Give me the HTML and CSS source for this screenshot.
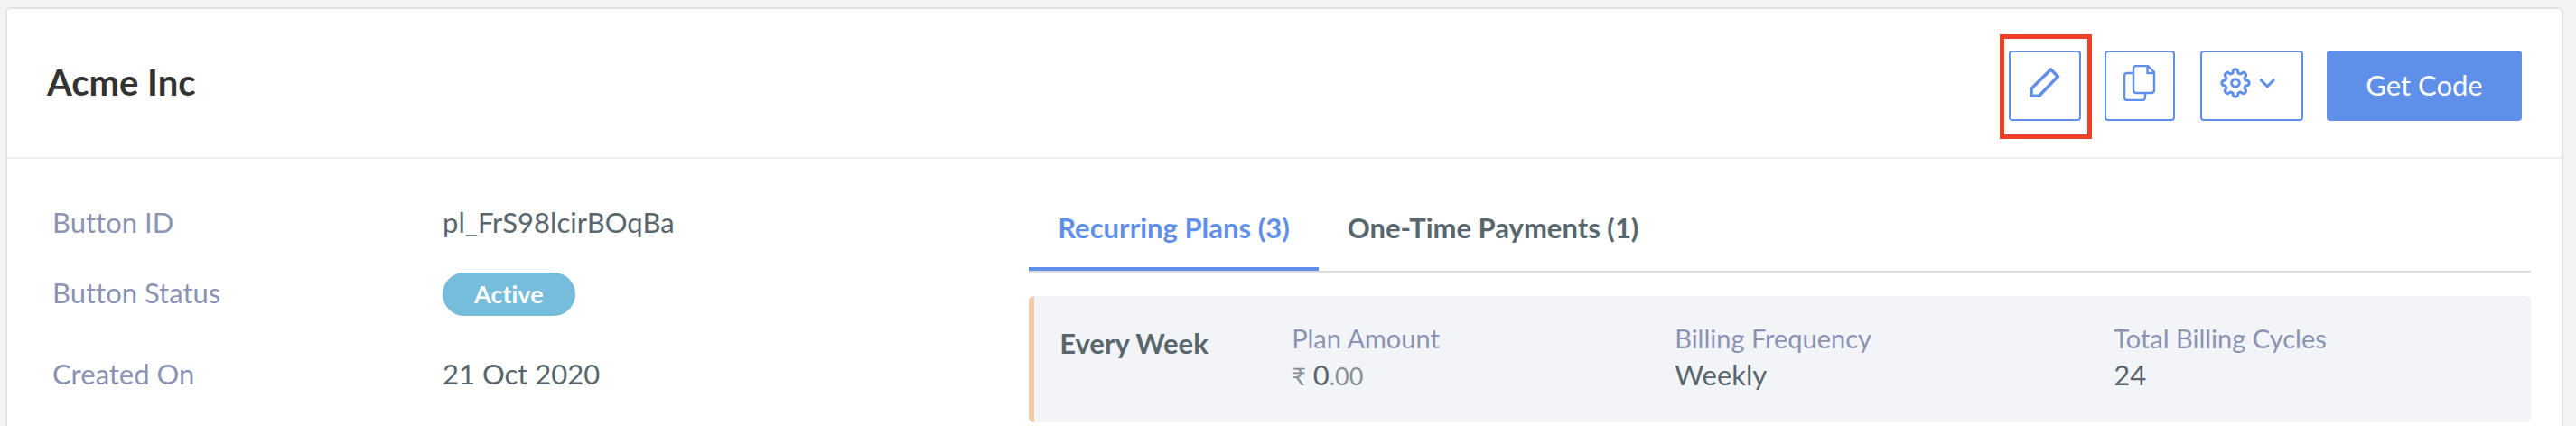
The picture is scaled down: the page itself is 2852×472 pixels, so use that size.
FILE: index.html
```html
<!DOCTYPE html>
<html lang="en">
<head>
<meta charset="utf-8">
<title>Acme Inc</title>
<link rel="stylesheet" href="styles.css">
</head>
<body>
<main class="card">
  <header class="card-header">
    <h1 class="title">Acme Inc</h1>
    <div class="actions">
      <div class="highlight">
        <button class="btn btn-edit" type="button" aria-label="Edit">
          <svg class="icon" width="36" height="36" viewBox="0 0 36 36"><path d="M24.500 3L32.300 10.800L11.600 32.300H3V24.200Z" stroke-width="3.500"/></svg>
        </button>
      </div>
      <button class="btn btn-copy" type="button" aria-label="Duplicate">
        <svg class="icon" width="36" height="40" viewBox="0 0 36 40"><path d="M14 1H27L34 8V28A3 3 0 0 1 31 31H14A3 3 0 0 1 11 28V4A3 3 0 0 1 14 1ZM26.500 1V9H34M11 9H4A3 3 0 0 0 1 12V36A3 3 0 0 0 4 39H21A3 3 0 0 0 24 36V31" stroke-width="2.400"/></svg>
      </button>
      <button class="btn btn-settings" type="button" aria-label="Settings">
        <svg class="icon" width="36" height="36" viewBox="-18 -18 36 36"><path d="M12.910 -2.740A2.800 2.800 0 0 1 12.910 2.740A2.500 2.500 0 0 0 11.070 7.190A2.800 2.800 0 0 1 7.190 11.070A2.500 2.500 0 0 0 2.740 12.910A2.800 2.800 0 0 1 -2.740 12.910A2.500 2.500 0 0 0 -7.190 11.070A2.800 2.800 0 0 1 -11.070 7.190A2.500 2.500 0 0 0 -12.910 2.740A2.800 2.800 0 0 1 -12.910 -2.740A2.500 2.500 0 0 0 -11.070 -7.190A2.800 2.800 0 0 1 -7.190 -11.070A2.500 2.500 0 0 0 -2.740 -12.910A2.800 2.800 0 0 1 2.740 -12.910A2.500 2.500 0 0 0 7.190 -11.070A2.800 2.800 0 0 1 11.070 -7.190A2.500 2.500 0 0 0 12.910 -2.740Z" stroke-width="3"/><circle r="4.300" stroke-width="3"/></svg>
        <svg class="icon" width="18" height="12" viewBox="0 0 18 12"><path d="M1.500 2L9.300 9.800L17 2" stroke-width="3"/></svg>
      </button>
      <button class="btn btn-primary" type="button">Get Code</button>
    </div>
  </header>
  <div class="card-body">
    <dl class="details">
      <dt>Button ID</dt><dd>pl_FrS98lcirBOqBa</dd>
      <dt>Button Status</dt><dd class="status"><span class="badge">Active</span></dd>
      <dt>Created On</dt><dd>21 Oct 2020</dd>
    </dl>
    <section class="plans">
      <div class="tabs" role="tablist">
        <button class="tab tab-active" type="button" role="tab" aria-selected="true">Recurring Plans (3)</button>
        <button class="tab" type="button" role="tab" aria-selected="false">One-Time Payments (1)</button>
      </div>
      <article class="plan">
        <h2 class="plan-name">Every Week</h2>
        <dl class="fact"><dt>Plan Amount</dt><dd><span class="minor">₹</span> 0<span class="minor">.00</span></dd></dl>
        <dl class="fact"><dt>Billing Frequency</dt><dd>Weekly</dd></dl>
        <dl class="fact"><dt>Total Billing Cycles</dt><dd>24</dd></dl>
      </article>
    </section>
  </div>
</main>
</body>
</html>
```

FILE: styles.css
```css
* { box-sizing: border-box; }

body {
  margin: 0;
  padding: 8px 14px 0 6px;
  background: #f1f3f5;
  color: #58666e;
  font: 31px/40px Lato, "Liberation Sans", sans-serif;
  font-variant-ligatures: none;
}

h1, h2, dl, dd { margin: 0; }

button { font-variant-ligatures: none; }

.card {
  min-height: calc(100vh - 8px);
  background: #fff;
  border: 2px solid #e2e5e8;
  border-bottom: 0;
  border-radius: 6px 6px 0 0;
}

.card-header {
  display: flex;
  align-items: center;
  justify-content: space-between;
  padding: 46px 44px 40px;
  border-bottom: 2px solid #eaefef;
}

.title {
  color: #333;
  font-size: 40px;
  font-weight: 700;
  line-height: 48px;
  padding-bottom: 8px;
}

.actions {
  display: flex;
  gap: 26px;
}

.btn {
  display: flex;
  align-items: center;
  justify-content: center;
  height: 78px;
  padding: 0 0 6px;
  border: 2px solid #5f8fe9;
  border-radius: 4px;
  background: #fff;
  color: #5f8fe9;
  font: inherit;
}

.btn-edit { width: 80px; }
.btn-copy { width: 78px; }

.btn-settings {
  justify-content: flex-start;
  gap: 8px;
  width: 114px;
  margin-left: 2px;
  padding-left: 19px;
}

.btn-primary {
  width: 216px;
  padding: 0 0 2px;
  background: #5f8fe9;
  color: #fff;
}

.icon {
  fill: none;
  stroke: currentColor;
}

.highlight { position: relative; }

.highlight::after {
  content: "";
  position: absolute;
  inset: -18px -12px -20px -10px;
  border: 5px solid #ec4126;
  pointer-events: none;
}

.card-body {
  display: grid;
  grid-template-columns: 2fr 3fr;
}

.details {
  display: grid;
  grid-template-columns: 432px 1fr;
  align-content: start;
  row-gap: 34px;
  padding: 48px 0 0 50px;
  line-height: 44px;
}

.details dt, .fact dt { color: #8b93b3; }

.status {
  display: flex;
  padding-bottom: 8px;
}

.badge {
  padding: 0 35px;
  border-radius: 24px;
  background: #75bddb;
  color: #fff;
  font-size: 27px;
  font-weight: 700;
  line-height: 48px;
}

.plans { padding-right: 34px; }

.tabs {
  display: flex;
  border-bottom: 2px solid #dadbdd;
  margin-bottom: 26px;
}

.tab {
  padding: 56px 32px 24px;
  border: 0;
  border-bottom: 4px solid transparent;
  background: none;
  color: #58666e;
  font: inherit;
  font-weight: 700;
}

.tab-active {
  border-color: #5f8fe9;
  color: #5f8fe9;
}

.plan {
  display: grid;
  grid-template-columns: 257px 424px 486px 1fr;
  min-height: 140px;
  padding: 27px 28px;
  border-left: 6px solid #f4c9a3;
  border-radius: 6px;
  background: #f3f4f8;
}

.plan-name {
  padding-top: 5px;
  font-size: 31px;
  font-weight: 700;
}

.fact dt { font-size: 29px; }

.minor {
  font-size: 27px;
  opacity: 0.7;
}
```
